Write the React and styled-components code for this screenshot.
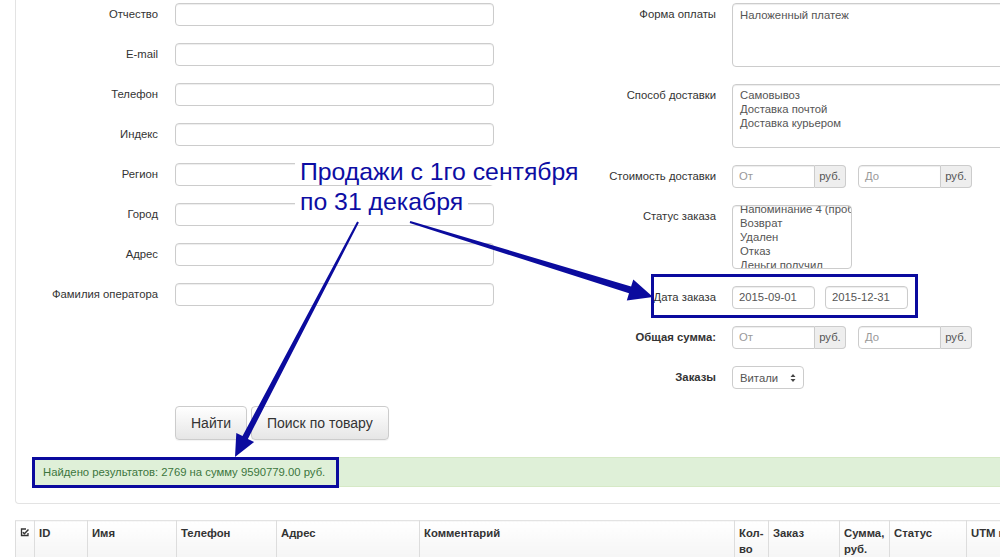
import React from 'react'
import styled, { createGlobalStyle } from 'styled-components'

const Global = createGlobalStyle`
  html, body { margin: 0; padding: 0; background: #fff; }
  body { font-family: "Liberation Sans", Arial, sans-serif; color: #333; }
`

const Page = styled.div`
  position: relative;
  width: 1000px;
  height: 557px;
  overflow: hidden;
  padding-left: 15px;
  box-sizing: border-box;
  font-size: 11.3px;
`

const Panel = styled.div`
  width: 1060px;
  box-sizing: border-box;
  border: 1px solid #e3e3e3;
  border-top: none;
  border-radius: 0 0 4px 4px;
  padding: 3px 16px 16px 16px;
`

const FormGrid = styled.div`
  display: grid;
  grid-template-columns: 462px 1fr;
  column-gap: 16px;
  align-items: start;
`

const Column = styled.div`
  display: flex;
  flex-direction: column;
  gap: 17px;
`

const Row = styled.div`
  display: grid;
  grid-template-columns: ${p => p.$label}px 1fr;
  column-gap: ${p => p.$gap}px;
  align-items: start;
`

const Label = styled.label`
  text-align: right;
  line-height: 23px;
  font-weight: ${p => (p.$bold ? 'bold' : 'normal')};
  white-space: nowrap;
`

const Input = styled.div`
  box-sizing: border-box;
  height: 23px;
  width: ${p => (p.$w ? `${p.$w}px` : '100%')};
  border: 1px solid #ccc;
  border-radius: 4px;
  box-shadow: inset 0 1px 1px rgba(0, 0, 0, 0.075);
  padding: 0 6px;
  line-height: 21px;
  color: ${p => (p.$ph ? '#999' : '#555')};
  background: #fff;
`

const Inline = styled.div`
  display: flex;
  gap: ${p => p.$gap}px;
`

const Group = styled.div`
  display: flex;
  width: 114px;
  height: 23px;
`

const GroupInput = styled(Input)`
  flex: 1;
  border-radius: 4px 0 0 4px;
`

const Addon = styled.span`
  box-sizing: border-box;
  width: 31px;
  border: 1px solid #ccc;
  border-left: none;
  border-radius: 0 4px 4px 0;
  background: #eee;
  color: #555;
  line-height: 21px;
  text-align: center;
`

const ListBox = styled.div`
  box-sizing: border-box;
  height: ${p => p.$h}px;
  width: ${p => (p.$w ? `${p.$w}px` : '100%')};
  border: 1px solid #ccc;
  border-radius: 4px;
  box-shadow: inset 0 1px 1px rgba(0, 0, 0, 0.075);
  padding: ${p => p.$pad || '2px 7px'};
  color: #555;
  overflow: hidden;
  line-height: 14px;
  white-space: nowrap;
`

const Option = styled.div`
  line-height: 14px;
`

const Select = styled.div`
  box-sizing: border-box;
  width: 72px;
  height: 23px;
  border: 1px solid #ccc;
  border-radius: 4px;
  padding: 0 7px;
  display: flex;
  align-items: center;
  justify-content: space-between;
  color: #555;
  background: #fff;
`

const Buttons = styled.div`
  display: flex;
  gap: 4px;
  margin-top: 17px;
  padding-left: 143px;
`

const Button = styled.button`
  height: 34px;
  padding: 0 15px;
  border: 1px solid #ccc;
  border-radius: 4px;
  background: linear-gradient(#fff, #e6e6e6);
  font-family: "Liberation Sans", Arial, sans-serif;
  font-size: 14px;
  color: #333;
  box-shadow: 0 1px 1px rgba(0, 0, 0, 0.05);
`

const Alert = styled.div`
  margin-top: 17px;
  height: 30px;
  box-sizing: border-box;
  border: 1px solid #d6e9c6;
  border-radius: 3px;
  background: #dff0d8;
  color: #3c763d;
  padding: 0 10px;
  line-height: 28px;
`

const Table = styled.table`
  margin-top: 16px;
  border-collapse: collapse;
  table-layout: fixed;
  width: 1051px;
`

const Th = styled.th`
  box-sizing: border-box;
  width: ${p => p.$w}px;
  border: 1px solid #ddd;
  border-top: 1px solid #e3e3e3;
  background: linear-gradient(#fff, #f0f0f0);
  text-align: left;
  vertical-align: top;
  font-size: 11.3px;
  font-weight: bold;
  line-height: 16px;
  padding: 4px 4px 20px 4px;
  white-space: nowrap;
  overflow: hidden;
`

const Callout = styled.div`
  position: absolute;
  left: 295px;
  top: 157px;
  width: 320px;
  font-size: 24.8px;
  line-height: 30px;
  color: #0d0da3;
  span {
    background: #fff;
    padding: 0 5px;
    -webkit-box-decoration-break: clone;
    box-decoration-break: clone;
  }
`

const Frame = styled.div`
  position: absolute;
  left: ${p => p.$x}px;
  top: ${p => p.$y}px;
  width: ${p => p.$w}px;
  height: ${p => p.$h}px;
  box-sizing: border-box;
  border: 3px solid #0b0b9e;
  pointer-events: none;
`

const Arrows = styled.svg`
  position: absolute;
  left: 0;
  top: 0;
  pointer-events: none;
`

const CheckIcon = () => (
  <svg width="9" height="9" viewBox="0 0 9 9" style={{ display: 'block', marginTop: 3 }}>
    <path d="M6 1H1.5v6.5H8V5" fill="none" stroke="#333" strokeWidth="1.3" />
    <path d="M2.8 4.2l1.6 1.6L8.5 1.5" fill="none" stroke="#333" strokeWidth="1.5" />
  </svg>
)

const UpDown = () => (
  <svg width="6" height="10" viewBox="0 0 6 10">
    <path d="M3 1L5.5 4H0.5z M3 9L0.5 6h5z" fill="#444" />
  </svg>
)

const leftFields = ['Отчество', 'E-mail', 'Телефон', 'Индекс', 'Регион', 'Город', 'Адрес', 'Фамилия оператора']

const columns = [
  [19, <CheckIcon />],
  [53, 'ID'],
  [89, 'Имя'],
  [100, 'Телефон'],
  [143, 'Адрес'],
  [315, 'Комментарий'],
  [34, <>Кол-<br />во</>],
  [71, 'Заказ'],
  [50, <>Сумма,<br />руб.</>],
  [77, 'Статус'],
  [100, 'UTM метка'],
]

const RangeGroup = ({ a, b }) => (
  <Inline $gap={12}>
    <Group>
      <GroupInput $ph>{a}</GroupInput>
      <Addon>руб.</Addon>
    </Group>
    <Group>
      <GroupInput $ph>{b}</GroupInput>
      <Addon>руб.</Addon>
    </Group>
  </Inline>
)

export default function App() {
  return (
    <>
      <Global />
      <Page>
        <Panel>
          <FormGrid>
            <Column>
              {leftFields.map(f => (
                <Row key={f} $label={126} $gap={17}>
                  <Label>{f}</Label>
                  <Input />
                </Row>
              ))}
            </Column>
            <Column>
              <Row $label={206} $gap={16}>
                <Label>Форма оплаты</Label>
                <ListBox $h={64} $pad="4px 7px">Наложенный платеж</ListBox>
              </Row>
              <Row $label={206} $gap={16}>
                <Label>Способ доставки</Label>
                <ListBox $h={64} $pad="3px 7px">
                  <Option>Самовывоз</Option>
                  <Option>Доставка почтой</Option>
                  <Option>Доставка курьером</Option>
                </ListBox>
              </Row>
              <Row $label={206} $gap={16}>
                <Label>Стоимость доставки</Label>
                <RangeGroup a="От" b="До" />
              </Row>
              <Row $label={206} $gap={16}>
                <Label>Статус заказа</Label>
                <ListBox $h={64} $w={120} $pad="0 7px">
                  <Option style={{ marginTop: -4 }}>Напоминание 4 (пробный)</Option>
                  <Option>Возврат</Option>
                  <Option>Удален</Option>
                  <Option>Отказ</Option>
                  <Option>Деньги получил</Option>
                </ListBox>
              </Row>
              <Row $label={206} $gap={16}>
                <Label>Дата заказа</Label>
                <Inline $gap={10}>
                  <Input $w={83}>2015-09-01</Input>
                  <Input $w={83}>2015-12-31</Input>
                </Inline>
              </Row>
              <Row $label={206} $gap={16}>
                <Label $bold>Общая сумма:</Label>
                <RangeGroup a="От" b="До" />
              </Row>
              <Row $label={206} $gap={16}>
                <Label $bold>Заказы</Label>
                <Select>
                  <span>Витали</span>
                  <UpDown />
                </Select>
              </Row>
            </Column>
          </FormGrid>
          <Buttons>
            <Button>Найти</Button>
            <Button>Поиск по товару</Button>
          </Buttons>
          <Alert>Найдено результатов: 2769 на сумму 9590779.00 руб.</Alert>
        </Panel>
        <Table>
          <thead>
            <tr>
              {columns.map(([w, c], i) => (
                <Th key={i} $w={w}>{c}</Th>
              ))}
            </tr>
          </thead>
        </Table>

        <Callout>
          <span>Продажи с 1го сентября</span>
          <br />
          <span>по 31 декабря</span>
        </Callout>
        <Frame $x={651} $y={274} $w={267} $h={44} />
        <Frame $x={32} $y={457} $w={307} $h={31} />
        <Arrows width="1000" height="557" viewBox="0 0 1000 557">
          <polygon
            fill="#0b0b9e"
            points="358.9,222.5 357.1,221.5 242.5,436.1 236.3,432.9 235,457 254.1,442.1 247.9,438.9"
          />
          <polygon
            fill="#0b0b9e"
            points="409.7,223 410.3,221 631.1,286.6 633.3,279.4 653,297 626.8,300.4 629,293.3"
          />
        </Arrows>
      </Page>
    </>
  )
}
